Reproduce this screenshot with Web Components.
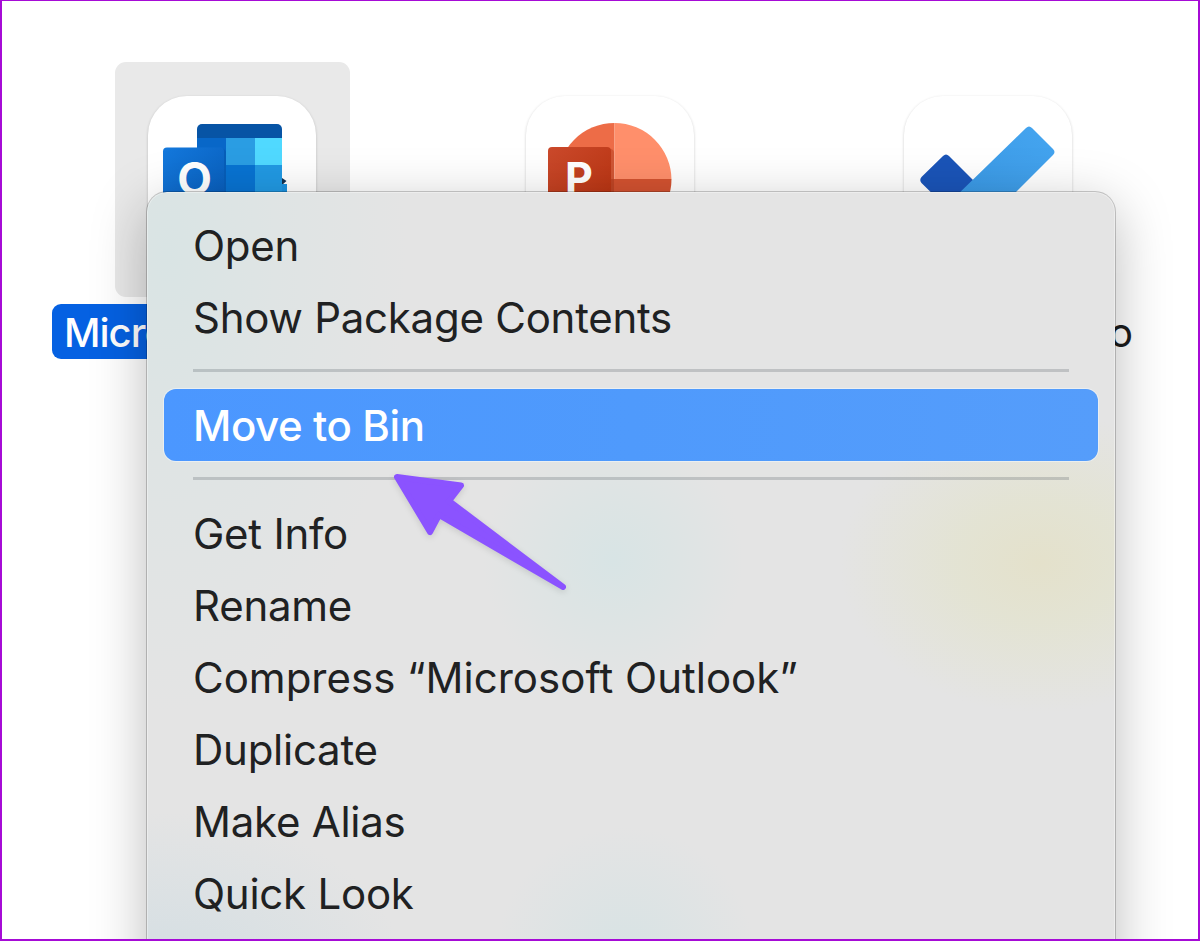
<!DOCTYPE html>
<html lang="en">
<head>
<meta charset="utf-8">
<title>Applications</title>
<style>
  html, body { margin: 0; height: 100%; }
  body { font-family: Inter, "Liberation Sans", sans-serif; overflow: hidden; }
  svg { display: block; width: 168px; height: 168px; }
  .wide { letter-spacing: 0; }
</style>
</head>
<body>
<finder-window>
  <app-icon label="Micro" selected>
    <svg viewBox="0 0 168 168" aria-hidden="true">
      <defs>
        <linearGradient id="badge-blue" x2="1" y2="1"><stop stop-color="#1479dd"/><stop offset="1" stop-color="#075bb8"/></linearGradient>
        <clipPath id="book"><rect x="49" y="28" width="85" height="100" rx="5"/></clipPath>
      </defs>
      <path d="M134 82l4.500 3-4.500 4z" fill="#12304f"/>
      <path d="M128 88h11v40h-11z" fill="#1b91df"/>
      <g clip-path="url(#book)">
        <path d="M49 28h85v14H49z" fill="#0754a5"/>
        <path d="M49 42h29v80H49z" fill="#0867c8"/>
        <path d="M78 42h29v27H78z" fill="#2a9de3"/>
        <path d="M107 42h27v27h-27z" fill="#50d9ff"/>
        <path d="M78 69h29v50H78z" fill="#0873d2"/>
        <path d="M107 69h27v50h-27z" fill="#2199e3"/>
      </g>
      <rect x="19" y="53" width="59" height="60" rx="4" fill="#03458d" opacity=".25"/>
      <rect x="15" y="51.500" width="61" height="62" rx="4" fill="url(#badge-blue)"/>
      <text x="46.500" y="99" text-anchor="middle" font-family="Inter, sans-serif" font-weight="700" font-size="45" fill="#fff">O</text>
    </svg>
  </app-icon>
  <app-icon>
    <svg viewBox="0 0 168 168" aria-hidden="true">
      <defs>
        <linearGradient id="badge-red" x2="1" y2="1"><stop stop-color="#cb4a2c"/><stop offset="1" stop-color="#b8320f"/></linearGradient>
      </defs>
      <path d="M88.500 27a57 57 0 0 0-57 57h57z" fill="#ed6c47"/>
      <path d="M88.500 27a57 57 0 0 1 57 57v-1h-57z" fill="#ff8f6b"/>
      <path d="M31.500 83h114a57 57 0 0 1-114 0z" fill="#d35230"/>
      <rect x="26" y="53" width="62" height="60" rx="4" fill="#9c2e12" opacity=".35"/>
      <rect x="22" y="51" width="63" height="62" rx="4" fill="url(#badge-red)"/>
      <text x="53" y="96.500" text-anchor="middle" font-family="Inter, sans-serif" font-weight="700" font-size="43" fill="#fff">P</text>
    </svg>
  </app-icon>
  <app-icon label="Microsoft To Do">
    <svg viewBox="0 0 168 168" aria-hidden="true">
      <defs>
        <linearGradient id="tick" x1="1" x2="0" y2="1"><stop stop-color="#45a5f0"/><stop offset="1" stop-color="#3796e2"/></linearGradient>
      </defs>
      <path d="M39 60Q42 57 45 60L75 90 48 117 17.500 87Q15 84 17.500 81Z" fill="#1a54b8"/>
      <path d="M122 32Q125 29 128 32L149 53Q152 56 149 59L76 132 48 104Z" fill="url(#tick)"/>
    </svg>
  </app-icon>

  <context-menu slot="overlay">
    <menu-item>Open</menu-item>
    <menu-item>Show Package Contents</menu-item>
    <menu-separator></menu-separator>
    <menu-item active>Move to Bin</menu-item>
    <menu-separator></menu-separator>
    <menu-item>Get Info</menu-item>
    <menu-item>Rename</menu-item>
    <menu-item class="wide">Compress “Microsoft Outlook”</menu-item>
    <menu-item>Duplicate</menu-item>
    <menu-item>Make Alias</menu-item>
    <menu-item>Quick Look</menu-item>
  </context-menu>
  <pointer-arrow slot="overlay"></pointer-arrow>
</finder-window>

<script>
function attach(host, html) {
  host.attachShadow({ mode: "open" }).innerHTML = html;
}

class FinderWindow extends HTMLElement {
  connectedCallback() {
    attach(this, `
      <style>
        :host {
          display: block; position: relative; box-sizing: border-box;
          width: 1200px; height: 941px; overflow: hidden;
          background: #fff;
        }
        .grid { display: grid; grid-template-columns: 379px 377px 378px; padding: 62px 0 0 42.500px; }
        .frame {
          position: absolute; inset: 0; z-index: 5;
          border: 2px solid #a60bd6; border-top-width: 1px; pointer-events: none;
        }
      </style>
      <div class="grid"><slot></slot></div>
      <slot name="overlay"></slot>
      <div class="frame"></div>
    `);
  }
}

class AppIcon extends HTMLElement {
  connectedCallback() {
    const label = this.getAttribute("label");
    attach(this, `
      <style>
        :host { display: flex; flex-direction: column; align-items: center; gap: 7px; }
        .well {
          box-sizing: border-box; width: 235px; height: 235px;
          padding: 34px 0 0 33.500px; border-radius: 11px;
        }
        .tile {
          width: 168px; height: 168px; border-radius: 39px; background: #fff;
          box-shadow: 0 1px 3px rgba(0, 0, 0, .2);
          overflow: hidden;
        }
        .label {
          box-sizing: border-box; height: 55px; padding: 0 12px; border-radius: 9px;
          font-size: 40px; line-height: 57px; white-space: nowrap;
          letter-spacing: -.75px; color: #1c1c1c;
        }
        :host([selected]) .well { background: #e9e9e9; }
        :host([selected]) .label {
          width: 360px; background: #0561e2; color: #fff;
          font-weight: 500; letter-spacing: -1px;
        }
      </style>
      <div class="well"><div class="tile"><slot></slot></div></div>
      ${label ? `<div class="label">${label}</div>` : ""}
    `);
  }
}

class ContextMenu extends HTMLElement {
  connectedCallback() {
    this.setAttribute("role", "menu");
    attach(this, `
      <style>
        :host {
          position: absolute; left: 147px; top: 192px; z-index: 1;
          display: flex; flex-direction: column; box-sizing: border-box;
          width: 968px; height: 800px; padding: 17px 17px 0;
          border-radius: 20px;
          background:
            radial-gradient(ellipse 240px 460px at 20px 60px, #d9e4e4 0, #dce4e4a0 45%, #e4e4e400 100%),
            radial-gradient(circle 130px at 466px 368px, #d8e4e5 0, #dae4e4b0 45%, #e4e4e400 100%),
            radial-gradient(ellipse 200px 150px at 892px 371px, #e4e1cb 0, #e3e3cfc8 42%, #e4e4e400 100%),
            radial-gradient(circle 130px at 478px 765px, #d7e3e4 0, #dae3e4b0 45%, #e4e4e400 100%),
            radial-gradient(ellipse 240px 170px at 20px 790px, #d3dee3 0, #e0e3e400 100%),
            #e4e4e4;
          box-shadow:
            inset 0 0 0 1px rgba(255, 255, 255, .35),
            0 0 0 1px rgba(0, 0, 0, .2),
            0 14px 55px rgba(0, 0, 0, .27);
        }
      </style>
      <slot></slot>
    `);
  }
}

class MenuItem extends HTMLElement {
  connectedCallback() {
    this.setAttribute("role", "menuitem");
    attach(this, `
      <style>
        :host {
          display: flex; align-items: center; flex: none; height: 72px;
          padding: 0 29px; box-sizing: border-box; border-radius: 12px;
          font-size: 42px; letter-spacing: -.25px; color: #202122; white-space: nowrap;
        }
        :host([active]) {
          background: linear-gradient(90deg, #4b97ff, #4f9afc 50%, #559dfb);
          box-shadow: 0 0 0 1px rgba(238, 243, 248, .7);
          color: #fff; font-weight: 500; letter-spacing: -.4px;
        }
      </style>
      <span><slot></slot></span>
    `);
  }
}

class MenuSeparator extends HTMLElement {
  connectedCallback() {
    this.setAttribute("role", "separator");
    attach(this, `
      <style>
        :host {
          display: flex; align-items: center; flex: none; box-sizing: border-box;
          height: 36px; padding: 0 29px 1px;
        }
        div { flex: 1; height: 3px; background: rgba(80, 88, 94, .25); }
      </style>
      <div></div>
    `);
  }
}

class PointerArrow extends HTMLElement {
  connectedCallback() {
    attach(this, `
      <style>
        :host { position: absolute; left: 380px; top: 460px; z-index: 2; }
        svg { display: block; filter: drop-shadow(0 2px 3px rgba(0, 0, 0, .12)); }
      </style>
      <svg width="200" height="140" viewBox="0 0 200 140" aria-hidden="true">
        <path d="M17 17 81 25.500 69 41 183 127 59 55 50 72Z"
          fill="#8b53ff" stroke="#8b53ff" stroke-width="6" stroke-linejoin="round"/>
      </svg>
    `);
  }
}

customElements.define("finder-window", FinderWindow);
customElements.define("app-icon", AppIcon);
customElements.define("context-menu", ContextMenu);
customElements.define("menu-item", MenuItem);
customElements.define("menu-separator", MenuSeparator);
customElements.define("pointer-arrow", PointerArrow);
</script>
</body>
</html>
